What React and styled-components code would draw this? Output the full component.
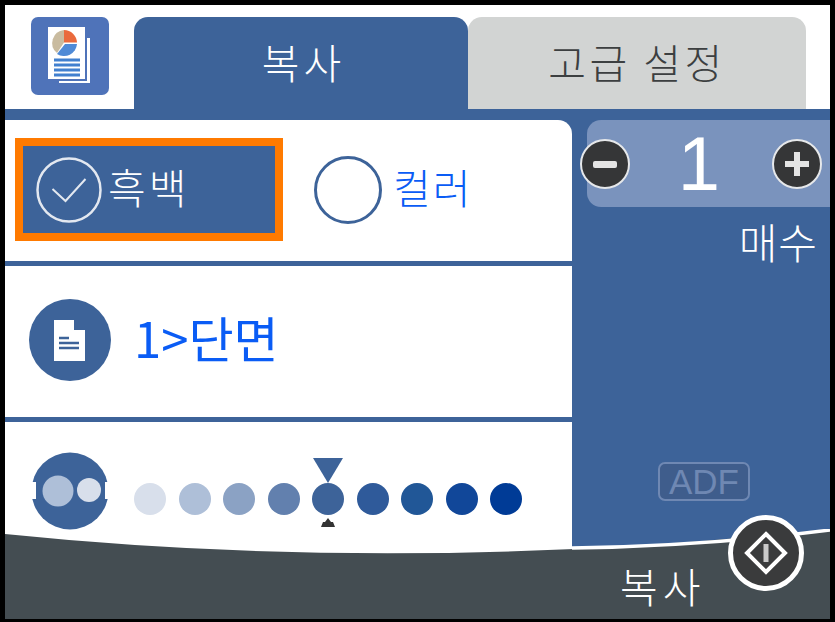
import React from 'react'
import styled, { createGlobalStyle } from 'styled-components'

const blue = '#3d6399'
const cjk = '"Noto Sans CJK KR", "Liberation Sans", sans-serif'

const Global = createGlobalStyle`
  html, body { margin: 0; padding: 0; background: #000; }
  #root { width: 835px; height: 622px; overflow: hidden; }
`

const Screen = styled.div`
  width: 835px;
  height: 622px;
  box-sizing: border-box;
  padding: 5px 5px 3px 5px;
  background: #000;
`

const Display = styled.div`
  position: relative;
  width: 825px;
  height: 614px;
  overflow: hidden;
  display: flex;
  flex-direction: column;
  background: #fff;
  font-family: ${cjk};
  font-weight: 300;
`

const TopBar = styled.div`
  height: 104px;
  flex: none;
  display: flex;
  align-items: flex-end;
  background: #fff;
  padding-right: 24px;
`

const AppIconBox = styled.div`
  width: 129px;
  height: 104px;
  flex: none;
  display: flex;
  padding: 12px 0 0 26px;
  box-sizing: border-box;
`

const Tab = styled.div`
  flex: 0 0 ${p => p.$w}px;
  height: 92px;
  border-radius: 14px 14px 0 0;
  display: flex;
  align-items: center;
  justify-content: center;
  background: ${p => (p.$active ? blue : '#d2d4d3')};
  color: ${p => (p.$active ? '#fff' : '#3c3f40')};
  font-size: 41px;
  letter-spacing: ${p => (p.$active ? '4px' : '3.500px')};
  padding: 0 0 4px ${p => (p.$active ? '5px' : '0')};
  box-sizing: border-box;
`

const Body = styled.div`
  flex: 1;
  display: flex;
  background: ${blue};
  padding-top: 11px;
  min-height: 0;
`

const LeftCol = styled.div`
  width: 567px;
  flex: none;
  display: flex;
  flex-direction: column;
  gap: 5px;
  border-top-right-radius: 14px;
  overflow: hidden;
`

const Row = styled.div`
  height: ${p => p.$h}px;
  flex: none;
  display: flex;
  align-items: ${p => p.$align || 'center'};
  background: #fff;
  box-sizing: border-box;
  padding-left: ${p => p.$pad}px;
`

const ColorChoice = styled.div`
  width: 268px;
  height: 103px;
  box-sizing: border-box;
  margin-top: -2px;
  border: 8px solid #ff7a00;
  background: ${blue};
  display: flex;
  align-items: center;
  padding-left: 12px;
  color: #fff;
  font-size: 41px;
  letter-spacing: 3px;
  gap: 5px;
`

const ColorOption = styled.div`
  display: flex;
  align-items: center;
  gap: 11px;
  margin-left: 31px;
  margin-top: -2px;
  color: #0a5cf5;
  font-size: 41px;
  letter-spacing: 2px;
`

const OptionText = styled.span`
  line-height: 1;
  margin-top: -6px;
`

const Ring = styled.div`
  width: 68px;
  height: 68px;
  box-sizing: border-box;
  border: 3px solid ${blue};
  border-radius: 50%;
`

const DuplexIcon = styled.div`
  display: flex;
  margin-top: -4px;
`

const DuplexText = styled.div`
  margin-left: 23px;
  margin-top: -10px;
  color: #0a5cf5;
  font-size: 49px;
  font-weight: 400;
  line-height: 1;
  display: flex;
  align-items: center;
`

const DensityIconBox = styled.div`
  display: flex;
  margin-top: 30px;
`

const Density = styled.div`
  position: relative;
  display: flex;
  gap: 12.500px;
  margin: 61px 0 0 25px;
`

const Dot = styled.div`
  width: 32px;
  height: 32px;
  border-radius: 50%;
  background: ${p => p.$color};
`

const Marker = styled.svg`
  position: absolute;
  left: 178px;
  top: ${p => p.$top}px;
`

const RightCol = styled.div`
  flex: 1;
  min-width: 0;
  display: flex;
  flex-direction: column;
  align-items: flex-end;
`

const Counter = styled.div`
  width: 243px;
  height: 87px;
  flex: none;
  display: flex;
  align-items: center;
  justify-content: space-between;
  background: #7a93bd;
  border-radius: 14px 0 0 14px;
  box-sizing: border-box;
  padding: 0 8px 0 0;
  color: #fff;
  font-family: 'Liberation Sans', sans-serif;
  font-weight: 400;
  font-size: 76px;
  line-height: 1;
`

const RoundButton = styled.div`
  width: 50px;
  height: 50px;
  box-sizing: border-box;
  margin-left: ${p => p.$shift || 0}px;
  border: 2px solid #e6e8ea;
  border-radius: 50%;
  background: #353637;
  display: flex;
  align-items: center;
  justify-content: center;
`

const CounterValue = styled.span`
  transform: translateX(-2px);
`

const CopiesLabel = styled.div`
  margin: 10px 12px 0 0;
  color: #fff;
  font-size: 42px;
  line-height: 48px;
  letter-spacing: 1px;
`

const AdfBadge = styled.div`
  width: 92px;
  height: 39px;
  margin: 197px 80px 0 0;
  box-sizing: border-box;
  border: 2px solid #6f88b3;
  border-radius: 7px;
  background: #3f5d8c;
  color: #6f88b3;
  font-family: 'Liberation Sans', sans-serif;
  font-weight: 400;
  font-size: 35px;
  display: flex;
  align-items: center;
  justify-content: center;
`

const Curve = styled.svg`
  position: absolute;
  left: 0;
  bottom: 0;
`

const FooterLabel = styled.div`
  position: absolute;
  left: 615px;
  bottom: 10px;
  color: #fff;
  font-size: 41px;
  line-height: 48px;
  letter-spacing: 5px;
`

const StartButton = styled.div`
  position: absolute;
  left: 723px;
  top: 510px;
  width: 76px;
  height: 76px;
  box-sizing: border-box;
  border: 5px solid #fff;
  border-radius: 50%;
  background: #3a3b3c;
  display: flex;
  align-items: center;
  justify-content: center;
`

const AppIcon = () => (
  <svg width="78" height="78" viewBox="0 0 78 78">
    <rect width="78" height="78" rx="7" fill="#4f73b9" />
    <path d="M28 64h28V21h3v45H28z" fill="#fff" />
    <rect x="17" y="10" width="37" height="52" fill="#fff" />
    <path d="M33 13a13 13 0 0 0-7 23l7-10.500z" fill="#c9bb9f" />
    <path d="M33 13a13 13 0 0 1 13 12.500H33z" fill="#ea6a3c" />
    <path d="M34 27h12a13 13 0 0 1-20 10z" fill="#4f8ad6" />
    <path d="M23 43h26M23 48h26M23 53h26M23 58h26" stroke="#4180cf" strokeWidth="3" />
  </svg>
)

const CheckRing = () => (
  <svg width="68" height="68" viewBox="0 0 68 68" fill="none" stroke="#e3e8f0">
    <circle cx="34" cy="34" r="31.500" strokeWidth="2.500" />
    <path d="M17.500 33l13 12 20-22" strokeWidth="2" />
  </svg>
)

const DocIcon = () => (
  <svg width="82" height="82" viewBox="0 0 82 82">
    <circle cx="41" cy="41" r="41" fill={blue} />
    <path d="M25 21h20v10h11v31H25z" fill="#fff" />
    <path d="M30 39h10M30 44h20M30 49h20" stroke={blue} strokeWidth="2.500" />
  </svg>
)

const DensityIcon = () => (
  <svg width="78" height="78" viewBox="0 0 78 78">
    <circle cx="39" cy="39" r="38.500" fill={blue} />
    <rect x="-1" y="30" width="6" height="17" fill="#fff" />
    <rect x="74" y="30" width="6" height="17" fill="#fff" />
    <circle cx="27" cy="39" r="15.500" fill="#aebfd8" />
    <circle cx="58" cy="38" r="12" fill="#d8dfeb" />
  </svg>
)

const StartIcon = () => (
  <svg width="46" height="46" viewBox="0 0 46 46">
    <path d="M23 4l19 19-19 19L4 23z" fill="none" stroke="#fff" strokeWidth="4" />
    <rect x="20.500" y="14" width="5" height="18" fill="#c9c9c9" />
  </svg>
)

const dots = ['#d8dfeb', '#aebfd8', '#8ba2c4', '#6280ae', '#3d6399', '#2f5a9a', '#215797', '#114799', '#003b96']

export default function App() {
  return (
    <Screen>
      <Global />
      <Display>
        <TopBar>
          <AppIconBox><AppIcon /></AppIconBox>
          <Tab $active $w={334}>복사</Tab>
          <Tab $w={338}>고급 설정</Tab>
        </TopBar>
        <Body>
          <LeftCol>
            <Row $h={141} $pad={10}>
              <ColorChoice>
                <CheckRing />
                <OptionText>흑백</OptionText>
              </ColorChoice>
              <ColorOption>
                <Ring />
                <OptionText>컬러</OptionText>
              </ColorOption>
            </Row>
            <Row $h={151} $pad={24}>
              <DuplexIcon><DocIcon /></DuplexIcon>
              <DuplexText>1&gt;단면</DuplexText>
            </Row>
            <Row $h={150} $pad={26} $align="flex-start">
              <DensityIconBox><DensityIcon /></DensityIconBox>
              <Density>
                {dots.map(c => <Dot key={c} $color={c} />)}
                <Marker $top={-25} width="32" height="25" viewBox="0 0 32 25">
                  <path d="M1 0h30L16 25z" fill={blue} />
                </Marker>
                <Marker $top={35} width="32" height="10" viewBox="0 0 32 10">
                  <path d="M16 0l3 4h2l2 5H9l2-5h2z" fill="#333" />
                </Marker>
              </Density>
            </Row>
          </LeftCol>
          <RightCol>
            <Counter>
              <RoundButton $shift={-7}>
                <svg width="30" height="30" viewBox="0 0 30 30"><rect x="3" y="12" width="24" height="7" rx="2" fill="#e4e4e4" /></svg>
              </RoundButton>
              <CounterValue>1</CounterValue>
              <RoundButton>
                <svg width="30" height="30" viewBox="0 0 30 30"><path d="M3 12h9V3h6v9h9v6h-9v9h-6v-9H3z" fill="#e4e4e4" /></svg>
              </RoundButton>
            </Counter>
            <CopiesLabel>매수</CopiesLabel>
            <AdfBadge>ADF</AdfBadge>
          </RightCol>
        </Body>
        <Curve width="825" height="90" viewBox="0 0 825 90">
          <path d="M0 5Q400 46 825 0V90H0z" fill="#444d52" stroke="none" />
          <path d="M567 19Q700 17 825 1" fill="none" stroke="#fff" strokeWidth="3.500" />
        </Curve>
        <FooterLabel>복사</FooterLabel>
        <StartButton><StartIcon /></StartButton>
      </Display>
    </Screen>
  )
}
